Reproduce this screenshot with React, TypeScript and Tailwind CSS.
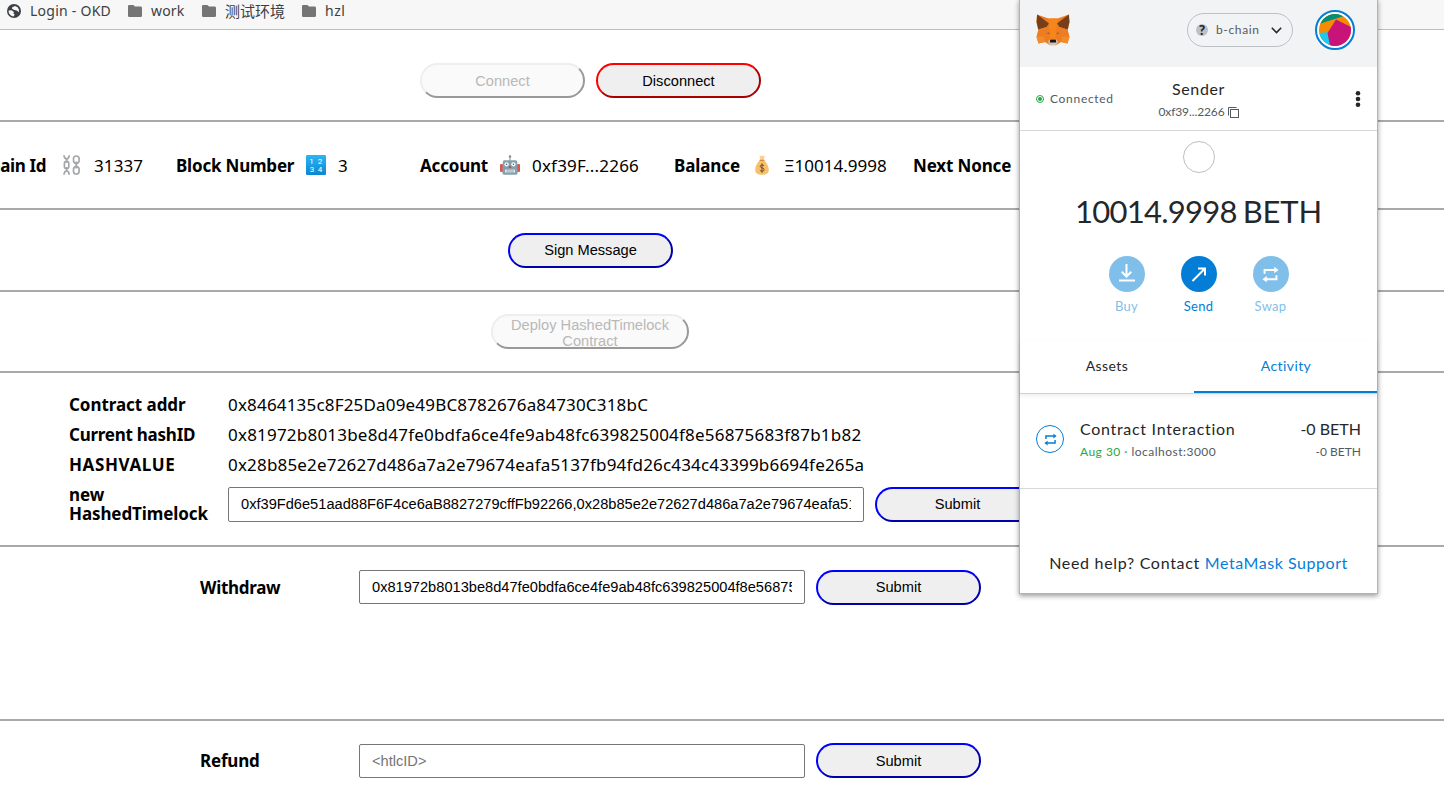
import React from "react";

const UI = "font-['Noto_Sans','Noto_Sans_CJK_SC',sans-serif]";
const BTN =
  "flex h-[35px] w-[165px] shrink-0 items-center justify-center rounded-[17.5px] border-2 [border-style:outset] bg-[#efefef] text-center font-['Liberation_Sans',Arial,sans-serif] text-[14.64px] leading-4 text-black";
const DISABLED =
  "flex h-[35px] shrink-0 items-center justify-center rounded-[17.5px] border-2 border-t-[#eeeeee] border-l-[#eeeeee] border-r-[#999999] border-b-[#999999] bg-[#fafafa] text-center font-['Liberation_Sans',Arial,sans-serif] text-[14.64px] leading-4 text-[#b8b8b8]";
const INPUT =
  "box-border rounded-[2px] border border-[#767676] bg-white px-3 font-['Liberation_Sans',Arial,sans-serif] text-[14.64px] text-black placeholder:text-[#757575] outline-none";

function Globe() {
  return (
    <svg className="block" width="14" height="14" viewBox="0 0 14 14">
      <circle cx="7" cy="7" r="7" fill="#3c3f43" />
      <path d="M1.6 6.6 L4.6 6.2 L6.9 8 L6.4 9.6 L7.7 10.4 L6.6 12.4 C3.6 12.2 1.4 9.8 1.6 6.6Z" fill="#f7f7f7" />
      <path d="M5.2 3.3 L8 2 L10.6 3.2 L11.9 5.4 L11.9 8.2 L9.7 6.4 L7.5 6 L5.1 5Z" fill="#f7f7f7" />
    </svg>
  );
}

function Folder() {
  return (
    <svg className="block" width="14" height="12" viewBox="0 0 14 12">
      <path d="M1.3 0H5.4L7 1.6H12.7A1.3 1.3 0 0 1 14 2.9V10.7A1.3 1.3 0 0 1 12.7 12H1.3A1.3 1.3 0 0 1 0 10.7V1.3A1.3 1.3 0 0 1 1.3 0Z" fill="#757575" />
    </svg>
  );
}

function Chains() {
  return (
    <svg className="block" width="18" height="20" viewBox="0 0 18 20" fill="none" stroke="#a5a7a8" strokeWidth="1.7">
      <path d="M1 0.3C1.2 3 2 4 3.6 4S6 3 6.2 0.3M1 19.7C1.2 17 2 16 3.6 16S6 17 6.2 19.7" />
      <rect x="1.4" y="6.4" width="4.4" height="7.2" rx="2.2" />
      <path d="M3.6 3V8M3.6 12V17" />
      <rect x="10.5" y="1" width="5.6" height="7.4" rx="2.8" />
      <rect x="10.5" y="11.6" width="5.6" height="7.4" rx="2.8" />
      <path d="M13.3 6.5V13.5" strokeWidth="2" />
    </svg>
  );
}

function Numbers() {
  return (
    <svg className="block" width="20" height="20" viewBox="0 0 20 20">
      <defs>
        <linearGradient id="keycap" x1="0" y1="0" x2="0" y2="1">
          <stop offset="0" stopColor="#29b6f6" />
          <stop offset="1" stopColor="#0a86d4" />
        </linearGradient>
      </defs>
      <rect width="20" height="20" rx="1.2" fill="url(#keycap)" />
      <g fill="#fff" fontFamily="Roboto, sans-serif" fontSize="8" textAnchor="middle">
        <text x="5.5" y="9">1</text>
        <text x="14" y="9">2</text>
        <text x="6" y="17">3</text>
        <text x="14" y="17">4</text>
      </g>
    </svg>
  );
}

function Robot() {
  return (
    <svg className="block" width="20" height="20" viewBox="0 0 20 20">
      <path d="M10 2V6" stroke="#78909c" strokeWidth="1" />
      <circle cx="10" cy="1.5" r="1.2" fill="#a07f80" />
      <rect x="0" y="9" width="3" height="8" rx="1" fill="#d9584d" />
      <rect x="17" y="9" width="3" height="8" rx="1" fill="#d9584d" />
      <path d="M4.2 5.2H15.8Q17 5.2 17.2 7L17.6 18Q17.6 19.8 16 19.8H4Q2.4 19.8 2.4 18L2.8 7Q3 5.2 4.2 5.2Z" fill="#82a0ad" />
      <circle cx="6.6" cy="9.3" r="2.1" fill="#fff" />
      <circle cx="13.4" cy="9.3" r="2.1" fill="#fff" />
      <circle cx="6.6" cy="9.3" r="0.8" fill="#46545b" />
      <circle cx="13.4" cy="9.3" r="0.8" fill="#46545b" />
      <path d="M10 10.3L11.5 13H8.5Z" fill="#d8433a" />
      <rect x="5" y="14.4" width="10" height="3.2" rx="0.6" fill="#e3e9eb" />
      <path d="M7.2 14.4V17.6M9.1 14.4V17.6M11 14.4V17.6M12.9 14.4V17.6" stroke="#6c7f88" strokeWidth="0.6" />
    </svg>
  );
}

function MoneyBag() {
  return (
    <svg className="block" width="16" height="20" viewBox="0 0 16 20">
      <path d="M5.4 0.8Q6.7 1.4 8 0.4Q9.3 1.4 10.8 0.8L9.6 5.2H6.4Z" fill="#fbd08a" />
      <path d="M6 4.8H10C11.6 7 14.8 10.4 14.8 14.8C14.8 18.4 12.4 19.8 8 19.8S1.2 18.4 1.2 14.8C1.2 10.4 4.4 7 6 4.8Z" fill="#f8c06a" />
      <path d="M5.7 5.4H10.3" stroke="#d68a3a" strokeWidth="1.2" />
      <path d="M10 10.8C9.2 9.6 6.2 9.6 6.2 11.4C6.2 13.3 10.1 12.4 10.1 14.7C10.1 16.7 6.6 16.6 5.9 15.2M8 8.4V17.8" fill="none" stroke="#6b4c30" strokeWidth="1" />
    </svg>
  );
}

function Fox() {
  return (
    <svg className="block" width="34" height="32" viewBox="0 0 34 32">
      <path d="M1 0.5L12.5 4.5H21.5L33 0.5L33.7 8L31.5 16L33.5 23L31.5 29.5L25 28L20.5 31H13.5L9 28L2.5 29.5L0.5 23L2.5 16L0.3 8Z" fill="#ee7c22" />
      <path d="M1.2 0.5L13 9.5L10.5 13L2.2 15.5L0.7 8Z" fill="#763e1a" />
      <path d="M32.8 0.5L21 9.5L23.5 13L31.8 15.5L33.3 8Z" fill="#763e1a" />
      <path d="M12.5 4.5H21.5L20.5 15L19.5 25H14.5L13.5 15Z" fill="#f6851b" />
      <path d="M2.5 15.5L10.5 13L14 22L9 28L7.5 22H0.8Z" fill="#ec7d20" />
      <path d="M31.5 15.5L23.5 13L20 22L25 28L26.5 22H33.2Z" fill="#ec7d20" />
      <path d="M0.5 22.5H8L9 28L2.5 29.5Z" fill="#f38a2c" />
      <path d="M33.5 22.5H26L25 28L31.5 29.5Z" fill="#f38a2c" />
      <path d="M10 19.4L13 18.2L13.8 20.3Z" fill="#8b6a58" />
      <path d="M24 19.4L21 18.2L20.2 20.3Z" fill="#8b6a58" />
      <path d="M12 28L14 25H20L22 28L20 31.5H14Z" fill="#d7c1b3" />
      <path d="M14.2 25.6H19.8L20.2 28.4H13.8Z" fill="#161616" />
    </svg>
  );
}

function Avatar() {
  return (
    <svg className="block" width="32" height="32" viewBox="0 0 32 32">
      <clipPath id="round">
        <circle cx="16" cy="16" r="16" />
      </clipPath>
      <g clipPath="url(#round)">
        <rect width="32" height="32" fill="#f88c00" />
        <path d="M0 10L25 2L20 0H0Z" fill="#018e77" />
        <path d="M0 19L10 18L11 32H0Z" fill="#19cbf0" />
        <path d="M17 5.5L32 13V32H11L8.5 19Z" fill="#c81478" />
      </g>
    </svg>
  );
}

function SwapIcon({ size }: { size: number }) {
  return (
    <svg className="block" width={size} height={size} viewBox="0 0 16 16" fill="none" stroke="currentColor" strokeWidth="1.8">
      <path d="M2.4 7.4V3.8H12M13.6 8.6V12.4H4" />
      <path d="M11.5 0.8V6.8L15.6 3.8ZM4.5 9.4V15.4L0.4 12.4Z" fill="currentColor" stroke="none" />
    </svg>
  );
}

function Action({ label, muted, children }: { label: React.ReactNode; muted?: boolean; children: React.ReactNode }) {
  return (
    <div className={muted ? "w-9 text-[#81bfeb]" : "w-9 text-[#037dd6]"}>
      <div className={muted ? "flex size-9 items-center justify-center rounded-full bg-[#81bfeb] text-white" : "flex size-9 items-center justify-center rounded-full bg-[#037dd6] text-white"}>
        {children}
      </div>
      <div className="-mx-4 mt-[5px] text-center text-[13px] leading-[18px] tracking-[0.3px]">{label}</div>
    </div>
  );
}

function Wallet() {
  return (
    <div className="absolute top-0 left-[1020px] h-[593px] w-[357px] bg-white font-['Lato',sans-serif] whitespace-nowrap text-[#24272a] shadow-[0_0_0_1px_#b3b3b3,0_2px_5px_1px_rgba(0,0,0,0.4)]">
      <div className="flex h-[67px] items-start bg-[#f2f3f4] pl-4">
        <div className="mt-[14px] w-[151px]"><Fox /></div>
        <div className="mt-[13px] flex h-[34px] w-[106px] items-center rounded-full border border-[#bbc0c5] pl-2 text-[#535a61]">
          <span className="flex size-3 items-center justify-center rounded-full bg-[#bbc0c5] text-[14px] leading-3 font-black text-[#24272a]">?</span>
          <span className="ml-2 w-[44px] text-[12px] tracking-[0.65px]">b-chain</span>
          <svg className="ml-[11px] block" width="11" height="7" viewBox="0 0 11 7" fill="none" stroke="#24272a" strokeWidth="1.5"><path d="M0.8 0.8L5.5 5.6L10.2 0.8" /></svg>
        </div>
        <div className="mt-[10px] ml-[22px] flex size-10 items-center justify-center rounded-full border-2 border-[#037dd6] bg-white"><Avatar /></div>
      </div>
      <div className="flex h-[64px] border-b border-[#d6d9dc] pl-4">
        <div className="flex w-[100px] items-center gap-[6px] text-[12px] text-[#535a61]">
          <span className="flex size-2 items-center justify-center rounded-full border border-[#28a745]"><span className="size-1 rounded-full bg-[#28a745]" /></span>
          <span className="tracking-[0.7px]">Connected</span>
        </div>
        <div className="flex w-[124px] flex-col items-center pt-[11px] pl-px">
          <div className="text-[16px] leading-[22px] tracking-[0.6px]">Sender</div>
          <div className="mt-1 flex items-center gap-[3px] text-[12px] leading-4 text-[#535a61]">
            <span className="tracking-[-0.1px]">0xf39...2266</span>
            <svg className="block" width="11" height="11" viewBox="0 0 11 11" fill="none" stroke="#535a61"><path d="M0.5 8.5V0.5H8.5" /><rect x="2.5" y="2.5" width="8" height="8" /></svg>
          </div>
        </div>
        <svg className="mt-[24px] ml-[95px] block" width="6" height="16" viewBox="0 0 6 16" fill="#24272a"><circle cx="3" cy="2.3" r="2.3" /><circle cx="3" cy="8" r="2.3" /><circle cx="3" cy="13.7" r="2.3" /></svg>
      </div>
      <div className="flex h-[209px] flex-col items-center pt-[10px]">
        <div className="size-8 rounded-full border border-[#bbc0c5]" />
        <div className="mt-[16px] text-[31px] leading-[44px] tracking-[-0.75px]">10014.9998<span className="ml-[6px] tracking-[-0.2px]">BETH</span></div>
        <div className="mt-[23px] flex gap-9">
          <Action muted label="Buy">
            <svg width="18" height="20" viewBox="0 0 18 20" fill="none" stroke="currentColor" strokeWidth="2"><path d="M8.5 0V12.5M3.7 7.7L8.5 12.5L13.3 7.7M1 16.5H17" /></svg>
          </Action>
          <Action label="Send">
            <svg width="16" height="16" viewBox="0 0 16 16" fill="none" stroke="currentColor" strokeWidth="2"><path d="M1.5 15L14 2.5M7 2.5H14V9.5" /></svg>
          </Action>
          <Action muted label="Swap"><SwapIcon size={17} /></Action>
        </div>
      </div>
      <div className="flex h-[54px] border-b border-[#d0d3d6] text-[14px] shadow-[0_2px_4px_rgba(0,0,0,0.07)]">
        <div className="flex w-[174px] items-center justify-center pb-[2px] tracking-[0.45px]">Assets</div>
        <div className="flex h-[53px] w-[183px] items-center justify-center border-b-2 border-[#037dd6] pl-px tracking-[0.4px] text-[#037dd6]">Activity</div>
      </div>
      <div className="flex h-[95px] items-start border-b border-[#d6d9dc] px-4 pt-[24px]">
        <div className="mt-[7px] flex size-7 items-center justify-center rounded-full border border-[#037dd6] text-[#037dd6]"><SwapIcon size={13} /></div>
        <div className="ml-4 grow">
          <div className="text-[16px] leading-[22px] tracking-[0.7px]">Contract Interaction</div>
          <div className="mt-1 text-[12px] leading-4 tracking-[0.48px] text-[#535a61]"><span className="text-[#28a745]">Aug 30 ·</span> localhost:3000</div>
        </div>
        <div className="text-right">
          <div className="text-[16px] leading-[22px]">-0 BETH</div>
          <div className="mt-1 text-[12px] leading-4 text-[#535a61]">-0 BETH</div>
        </div>
      </div>
      <div className="pt-[63px] text-center text-[16px] leading-[22px] tracking-[0.7px]">Need help? Contact <span className="tracking-[0.55px] text-[#037dd6]">MetaMask Support</span></div>
    </div>
  );
}

export default function App() {
  return (
    <div className={`relative h-[810px] w-[1444px] overflow-hidden bg-white whitespace-nowrap text-black ${UI}`}>
      <header className="flex h-[30px] items-start border-b border-[#bdbdbd] bg-[#f7f7f7] text-[14px] leading-[22px] text-[#3c4043]">
        <div className="mt-1 ml-[7px] w-[23px]"><Globe /></div>
        <div className="w-[98px] tracking-[0.25px]">Login - OKD</div>
        <div className="mt-[5px] w-[23px]"><Folder /></div>
        <div className="w-[51px] tracking-[0.2px]">work</div>
        <div className="mt-[5px] w-[23px]"><Folder /></div>
        <div className="w-[77px] text-[15px]">测试环境</div>
        <div className="mt-[5px] w-[23px]"><Folder /></div>
        <div className="tracking-[0.5px]">hzl</div>
      </header>

      <section className="flex h-[92px] gap-[11px] border-b-2 border-[#a9a9a9] pt-[33px] pl-[420px]">
        <button className={`${DISABLED} w-[165px]`}>Connect</button>
        <button className={`${BTN} border-[#ff0000]`}>Disconnect</button>
      </section>

      <section className="flex h-[88px] items-center border-b-2 border-[#a9a9a9] pt-px text-[17px]">
        <div className="flex w-[46px] justify-end overflow-hidden font-bold tracking-[-0.4px]">Chain Id</div>
        <div className="mb-px ml-[17px] w-[31px]"><Chains /></div>
        <div className="w-[82px] tracking-[0.1px]">31337</div>
        <div className="w-[130px] font-bold tracking-[-0.2px]">Block Number</div>
        <div className="mb-[2px] w-8"><Numbers /></div>
        <div className="w-[82px]">3</div>
        <div className="w-20 font-bold tracking-[-0.2px]">Account</div>
        <div className="mb-[2px] w-8"><Robot /></div>
        <div className="w-[142px] tracking-[0.2px]">0xf39F...2266</div>
        <div className="w-20 font-bold tracking-[-0.1px]">Balance</div>
        <div className="mb-[2px] w-[30px]"><MoneyBag /></div>
        <div className="w-[129px]">Ξ10014.9998</div>
        <div className="font-bold tracking-[-0.15px]">Next Nonce</div>
      </section>

      <section className="h-[82px] border-b-2 border-[#a9a9a9] pt-[23px] pl-[508px]">
        <button className={`${BTN} border-[#0000ff] pb-px`}>Sign Message</button>
      </section>

      <section className="h-[81px] border-b-2 border-[#a9a9a9] pt-[22px] pl-[491px]">
        <button className={`${DISABLED} w-[198px] px-3 pt-[2px] whitespace-normal`}>Deploy HashedTimelock Contract</button>
      </section>

      <section className="h-[174px] border-b-2 border-[#a9a9a9] pt-[17px] pl-[69px] text-[17px]">
        <div className="flex h-[30px] items-center"><b className="w-[159px] tracking-[-0.05px]">Contract addr</b><span className="tracking-[0.18px]">0x8464135c8F25Da09e49BC8782676a84730C318bC</span></div>
        <div className="flex h-[30px] items-center"><b className="w-[159px] tracking-[-0.25px]">Current hashID</b><span className="tracking-[0.21px]">0x81972b8013be8d47fe0bdfa6ce4fe9ab48fc639825004f8e56875683f87b1b82</span></div>
        <div className="flex h-[30px] items-center"><b className="w-[159px] tracking-[0.6px]">HASHVALUE</b><span className="tracking-[0.18px]">0x28b85e2e72627d486a7a2e79674eafa5137fb94fd26c434c43399b6694fe265a</span></div>
        <div className="mt-[7px] flex h-[35px] items-center">
          <b className="w-[159px] pb-[2px] leading-[19px] tracking-[-0.1px]">new<br />HashedTimelock</b>
          <input className={`${INPUT} h-[35px] w-[636px] pb-[2px]`} defaultValue="0xf39Fd6e51aad88F6F4ce6aB8827279cffFb92266,0x28b85e2e72627d486a7a2e79674eafa5137fb94fd26c434c43399b6694fe265a" />
          <button className={`${BTN} ml-[11px] border-[#0000ff] pb-px`}>Submit</button>
        </div>
      </section>

      <section className="flex h-[174px] items-start border-b-2 border-[#a9a9a9] pt-[23px] pl-[200px] text-[17px]">
        <b className="w-[159px] leading-[35px] tracking-[-0.3px]">Withdraw</b>
        <input className={`${INPUT} h-[34px] w-[446px]`} defaultValue="0x81972b8013be8d47fe0bdfa6ce4fe9ab48fc639825004f8e56875683f87b1b82" />
        <button className={`${BTN} ml-[11px] border-[#0000ff] pb-px`}>Submit</button>
      </section>

      <section className="flex items-start pt-[22px] pl-[200px] text-[17px]">
        <b className="w-[159px] leading-[35px] tracking-[-0.2px]">Refund</b>
        <input className={`${INPUT} mt-px h-[34px] w-[446px]`} placeholder="<htlcID>" />
        <button className={`${BTN} ml-[11px] border-[#0000ff]`}>Submit</button>
      </section>

      <Wallet />
    </div>
  );
}
